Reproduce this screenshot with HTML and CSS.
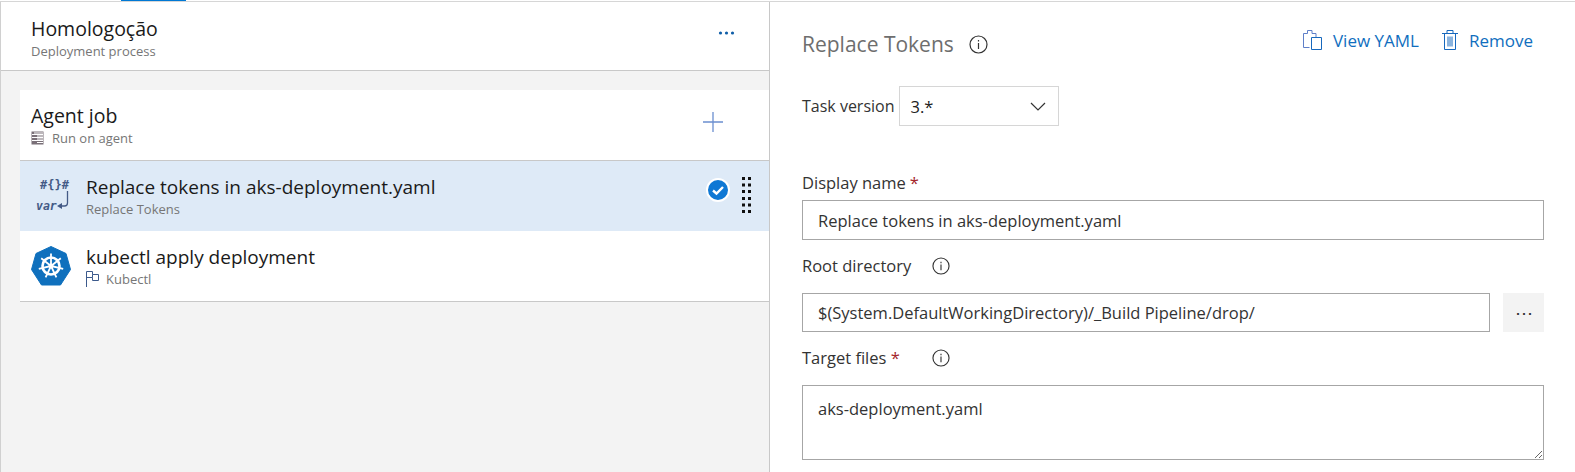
FILE: index.html
```html
<!DOCTYPE html>
<html lang="en">
<head>
    <meta charset="UTF-8">
    <title>Homologoção - Deployment process</title>
    <link rel="stylesheet" href="styles.css">
</head>
<body>
    <div class="tab-strip"><div class="tab-active"></div></div>
    <div class="container">
        <div class="left-panel">
            <div class="process-header">
                <div>
                    <div class="row-title title-large">Homologoção</div>
                    <div class="row-sub">Deployment process</div>
                </div>
                <svg class="more-icon" width="18" height="6" viewBox="0 0 18 6"><circle cx="2.5" cy="3" r="1.6"/><circle cx="8.5" cy="3" r="1.6"/><circle cx="14.5" cy="3" r="1.6"/></svg>
            </div>
            <div class="job-card">
                <div class="job-row">
                    <div>
                        <div class="row-title title-large">Agent job</div>
                        <div class="row-sub job-sub">
                            <svg class="server-icon" width="13" height="14" viewBox="0 0 13 14">
                                <rect x="0.5" y="0.5" width="12" height="13" fill="#7a7078"/>
                                <path d="M1 3.5h11M1 6.5h11M1 9.5h11M3 2h9M6 5h6M6 8h6M6 11.500h6" stroke="#fff" stroke-width="1" fill="none"/>
                            </svg>
                            Run on agent
                        </div>
                    </div>
                    <svg class="add-icon" width="22" height="22" viewBox="0 0 22 22"><path d="M11 1v20M1 11h20" stroke="#6b8fd0" stroke-width="1.300" fill="none"/></svg>
                </div>
                <div class="task-row selected">
                    <svg class="task-icon token-icon" width="38" height="36" viewBox="0 0 38 36">
                        <text x="6" y="11" class="token-text">#{}#</text>
                        <text x="2" y="32" class="var-text">var</text>
                        <path d="M33.500 13v12q0 3-3 3h-4" stroke="#445a86" stroke-width="1.300" fill="none"/>
                        <path d="M28 25l-5 3 5 3z" fill="#445a86"/>
                    </svg>
                    <div class="task-text">
                        <div class="row-title">Replace tokens in aks-deployment.yaml</div>
                        <div class="row-sub">Replace Tokens</div>
                    </div>
                    <svg class="check-icon" width="24" height="24" viewBox="0 0 24 24">
                        <circle cx="12" cy="12" r="11" fill="#0f78d4" stroke="#fff" stroke-width="2"/>
                        <path d="M7 12.500l3.500 3 6.500-6.500" stroke="#fff" stroke-width="2.400" fill="none"/>
                    </svg>
                    <svg class="grip-icon" width="9" height="36" viewBox="0 0 9 36">
                        <path d="M0 0h3v3H0zM6 0h3v3H6zM0 6.500h3v3H0zM6 6.500h3v3H6zM0 13h3v3H0zM6 13h3v3H6zM0 20h3v3H0zM6 20h3v3H6zM0 26.500h3v3H0zM6 26.500h3v3H6zM0 33h3v3H0zM6 33h3v3H6z" fill="#111"/>
                    </svg>
                </div>
                <div class="task-row">
                    <svg class="task-icon kube-icon" width="40" height="40" viewBox="0 0 40 40">
                        <path d="M20 0.500 35 7.500 39.500 23.500 29.500 39 10.500 39 0.500 23.500 5 7.500z" fill="#0f70bd" stroke="#0f70bd" stroke-linejoin="round" stroke-width="1"/>
                        <circle cx="20" cy="20" r="8.500" fill="none" stroke="#fff" stroke-width="2.600"/>
                        <circle cx="20" cy="20" r="2.400" fill="#fff"/>
                        <path d="M20 20V7.500M20 20L29.800 12.200M20 20L32.200 22.800M20 20L25.400 31.300M20 20L14.600 31.300M20 20L7.800 22.800M20 20L10.200 12.200" stroke="#fff" stroke-width="1.800" fill="none"/>
                    </svg>
                    <div class="task-text">
                        <div class="row-title">kubectl apply deployment</div>
                        <div class="row-sub job-sub kube-sub">
                            <svg class="flag-icon" width="13" height="16" viewBox="0 0 13 16">
                                <path d="M0.500 16V0.500H6.500V3.500H12.500V9.500H6.500V6.500H0.500M6.500 3.500V6.500" stroke="#3c5a8c" fill="none"/>
                            </svg>
                            Kubectl
                        </div>
                    </div>
                </div>
            </div>
        </div>

        <div class="right-panel">
            <div class="task-header">
                <div class="task-name">
                    <h2>Replace Tokens</h2>
                    <svg class="info-icon info-large" width="19" height="19" viewBox="0 0 19 19"><circle cx="9.500" cy="9.500" r="8.500"/><path d="M9.500 8v6M9.500 5v1.600"/></svg>
                </div>
                <div class="task-actions">
                    <a class="action-link">
                        <svg width="19" height="20" viewBox="0 0 19 20"><path d="M6.500 17.500H0.500V3.500H4.500V0.500H9V3.500H13V7" stroke="#5f7fc8" fill="none"/><path d="M8.500 7.500h10v12h-10z" stroke="#1768bd" fill="none"/></svg>
                        View YAML
                    </a>
                    <a class="action-link">
                        <svg width="16" height="20" viewBox="0 0 16 20"><path d="M0 3.500h16M5 3.500V0.500h6v3M2.500 3.500v16h11v-16M6 6.500v10M8 6.500v10M10 6.500v10" stroke="#1768bd" fill="none"/></svg>
                        Remove
                    </a>
                </div>
            </div>

            <div class="version-row">
                <label>Task version</label>
                <div class="version-select">
                    <span>3.*</span>
                    <svg width="16" height="9" viewBox="0 0 16 9"><path d="M1 1l7 7 7-7" stroke="#333" stroke-width="1.200" fill="none"/></svg>
                </div>
            </div>

            <div class="form-field name-field">
                <label>Display name <span class="required">*</span></label>
                <input type="text" class="text-input" value="Replace tokens in aks-deployment.yaml">
            </div>

            <div class="form-field">
                <label class="label-info">Root directory
                    <svg class="info-icon" width="18" height="18" viewBox="0 0 19 19"><circle cx="9.500" cy="9.500" r="8.500"/><path d="M9.500 8v6M9.500 5v1.600"/></svg>
                </label>
                <div class="input-group">
                    <input type="text" class="text-input" value="$(System.DefaultWorkingDirectory)/_Build Pipeline/drop/">
                    <button class="browse-btn">&#8943;</button>
                </div>
            </div>

            <div class="form-field">
                <label class="label-info"><span>Target files <span class="required">*</span></span>
                    <svg class="info-icon" width="18" height="18" viewBox="0 0 19 19"><circle cx="9.500" cy="9.500" r="8.500"/><path d="M9.500 8v6M9.500 5v1.600"/></svg>
                </label>
                <textarea class="text-area">aks-deployment.yaml</textarea>
            </div>
        </div>
    </div>
</body>
</html>
```

FILE: styles.css
```css
* {
    box-sizing: border-box;
    margin: 0;
    padding: 0;
}

html, body {
    height: 472px;
    overflow: hidden;
}

body {
    font-family: "Open Sans", Arial, sans-serif;
    background-color: #fff;
    color: #212121;
}

.tab-strip {
    height: 2px;
    border-bottom: 1px solid #d6d6d6;
    position: relative;
}

.tab-active {
    position: absolute;
    top: 0;
    left: 121px;
    width: 65px;
    height: 1px;
    background-color: #0078d4;
}

.container {
    display: flex;
    height: 470px;
}

.left-panel {
    width: 770px;
    flex-shrink: 0;
    background-color: #f3f3f3;
    border-left: 1px solid #d0d0d0;
    border-right: 1px solid #c8c8c8;
}

.process-header {
    height: 69px;
    padding: 4px 32px 0 30px;
    background-color: #fff;
    border-bottom: 1px solid #c8c8c8;
    display: flex;
    justify-content: space-between;
    align-items: center;
}

.more-icon {
    fill: #0f5ea8;
    margin-right: 1px;
    margin-bottom: 10px;
}

.row-title {
    font-size: 19px;
    line-height: 26px;
    color: #1a1a1a;
}

.title-large {
    font-size: 19.500px;
}

.row-sub {
    font-size: 13px;
    line-height: 18px;
    color: #767676;
}

.job-card {
    margin: 19px 0 0 19px;
    background-color: #fff;
    border-bottom: 1px solid #c8c8c8;
}

.job-row {
    height: 71px;
    padding: 0 45px 0 11px;
    border-bottom: 1px solid #c8c8c8;
    display: flex;
    justify-content: space-between;
    align-items: center;
}

.job-sub {
    display: flex;
    align-items: center;
    gap: 8px;
}

.add-icon {
    margin-bottom: 6px;
}

.task-row {
    height: 70px;
    display: flex;
    align-items: center;
}

.task-row.selected {
    background-color: #deeaf7;
}

.task-icon {
    flex-shrink: 0;
    margin-left: 11px;
    margin-right: 15px;
}

.token-icon {
    margin-left: 14px;
    margin-right: 14px;
}

.task-text {
    flex-grow: 1;
}

.token-text {
    font-family: "DejaVu Sans Mono", monospace;
    font-size: 12px;
    font-weight: bold;
    fill: #445a86;
}

.var-text {
    font-family: "DejaVu Sans Mono", monospace;
    font-size: 11.500px;
    font-style: italic;
    font-weight: bold;
    fill: #445a86;
}

.check-icon {
    margin-right: 12px;
    margin-bottom: 12px;
}

.grip-icon {
    margin-right: 18px;
    margin-bottom: 3px;
}

.kube-sub {
    gap: 7px;
}

.right-panel {
    flex-grow: 1;
    padding: 0 31px 0 32px;
}

.task-header {
    height: 84px;
    display: flex;
    justify-content: space-between;
    align-items: center;
}

.task-name {
    display: flex;
    align-items: center;
    gap: 15px;
}

.task-name h2 {
    font-size: 21px;
    font-weight: 400;
    color: #6e6e6e;
}

.task-actions {
    display: flex;
    gap: 23px;
    padding-right: 11px;
    margin-bottom: 8px;
}

.action-link {
    display: flex;
    align-items: center;
    gap: 11px;
    font-size: 17px;
    color: #106ebe;
}

label {
    font-size: 16.500px;
    line-height: 20px;
    color: #333;
    display: flex;
    align-items: center;
    gap: 4px;
}

.version-row {
    display: flex;
    align-items: center;
    gap: 4px;
}

.version-row label {
    font-size: 16px;
}

.version-select {
    width: 160px;
    height: 40px;
    padding: 0 12px 0 11px;
    border: 1px solid #d6d6d6;
    font-size: 16.500px;
    display: flex;
    justify-content: space-between;
    align-items: center;
}

.form-field {
    margin-bottom: 10px;
}

.form-field label {
    height: 32px;
    margin-bottom: 11px;
}

.form-field .label-info {
    width: 148px;
    justify-content: space-between;
}

.name-field {
    margin-top: 44px;
}

.name-field label {
    height: 26px;
    margin-bottom: 4px;
}

.required {
    color: #a4262c;
}

.info-icon {
    fill: none;
    stroke: #333;
    stroke-width: 1.200;
}

.info-large {
    margin-top: 1px;
}

.text-input {
    display: block;
    width: 100%;
    height: 40px;
    padding: 0 15px;
    border: 1px solid #a6a6a6;
    border-radius: 0;
    font-family: inherit;
    font-size: 16.500px;
    color: #333;
}

.input-group {
    display: flex;
    gap: 13px;
}

.input-group .text-input {
    flex-grow: 1;
    height: 39px;
}

.browse-btn {
    width: 41px;
    flex-shrink: 0;
    border: none;
    background-color: #f3f3f3;
    font-size: 18px;
    color: #333;
}

.text-area {
    display: block;
    width: 100%;
    height: 75px;
    padding: 11px 15px;
    border: 1px solid #a6a6a6;
    border-radius: 0;
    font-family: inherit;
    font-size: 16.500px;
    color: #333;
}
```
